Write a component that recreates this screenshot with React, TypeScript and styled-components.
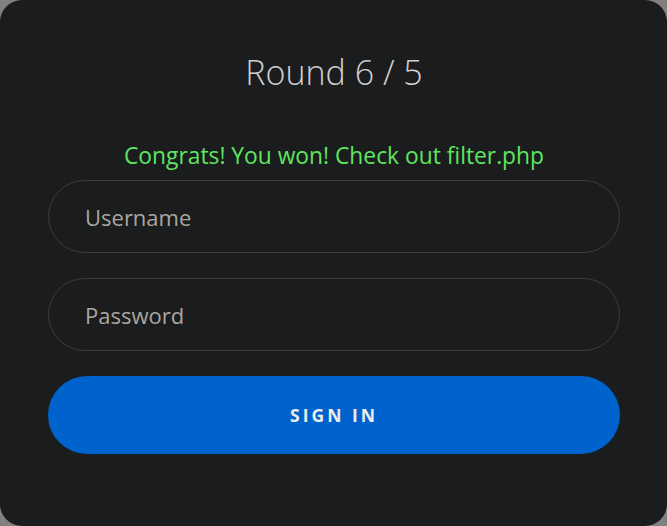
import React from "react";
import styled, { createGlobalStyle } from "styled-components";

const Global = createGlobalStyle`
  html, body { margin: 0; padding: 0; background: #808080; }
  body { font-family: "Open Sans", "Noto Sans", sans-serif; }
  * { box-sizing: border-box; }
`;

const Card = styled.div`
  width: 667px;
  height: 526px;
  background: #1b1c1e;
  border-radius: 22px;
  padding: 50px 47px 0 48px;
  display: flex;
  flex-direction: column;
`;

const Title = styled.h1`
  margin: 0;
  text-align: center;
  font-size: 34px;
  font-weight: 300;
  color: #cfcfcf;
  line-height: 44px;
`;

const Message = styled.p`
  margin: 47px 0 9px;
  text-align: center;
  font-size: 22.8px;
  line-height: 30px;
  color: #5ee65e;
`;

const Form = styled.form`
  display: flex;
  flex-direction: column;
  gap: 25px;
`;

const Input = styled.input`
  width: 100%;
  height: 73px;
  border: 1px solid #3b3c3e;
  border-radius: 37px;
  background: transparent;
  padding: 0 36px;
  font-family: inherit;
  font-size: 22px;
  color: #ddd;
  outline: none;
  &::placeholder { color: #aaa69f; }
`;

const Button = styled.button`
  width: 100%;
  height: 78px;
  border: none;
  border-radius: 39px;
  background: #0062cc;
  color: #ececec;
  font-family: inherit;
  font-size: 17.5px;
  font-weight: 700;
  letter-spacing: 3px;
  cursor: pointer;
`;

export default function App() {
  return (
    <>
      <Global />
      <Card>
        <Title>Round 6 / 5</Title>
        <Message>Congrats! You won! Check out filter.php</Message>
        <Form onSubmit={(e) => e.preventDefault()}>
          <Input type="text" placeholder="Username" />
          <Input type="password" placeholder="Password" />
          <Button type="submit">SIGN IN</Button>
        </Form>
      </Card>
    </>
  );
}
